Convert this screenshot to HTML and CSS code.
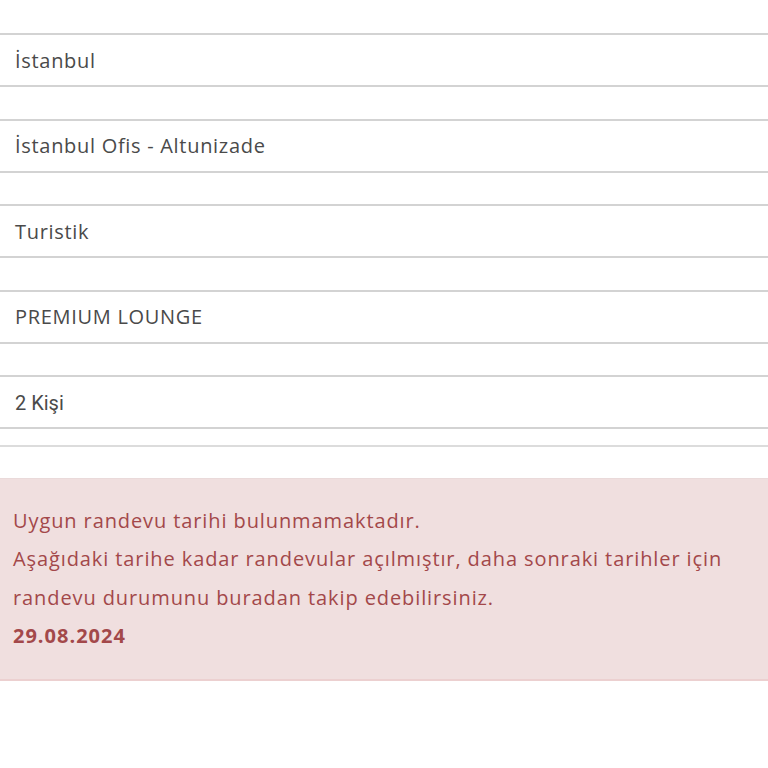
FILE: index.html
```html
<!DOCTYPE html>
<html lang="tr">
<head>
<meta charset="utf-8">
<link rel="stylesheet" href="styles.css">
</head>
<body>
<div class="page">
  <div class="fields">
    <div class="field">İstanbul</div>
    <div class="field">İstanbul Ofis - Altunizade</div>
    <div class="field">Turistik</div>
    <div class="field">PREMIUM LOUNGE</div>
    <div class="field alt">2 Kişi</div>
  </div>
  <div class="divider"></div>
  <div class="alert">
    <p>Uygun randevu tarihi bulunmamaktadır.</p>
    <p>Aşağıdaki tarihe kadar randevular açılmıştır, daha sonraki tarihler için randevu durumunu buradan takip edebilirsiniz.</p>
    <p class="date">29.08.2024</p>
  </div>
</div>
</body>
</html>
```

FILE: styles.css
```css
html, body {
  margin: 0;
  padding: 0;
  background: #ffffff;
}
.page {
  font-family: "Open Sans", "Liberation Sans", sans-serif;
  color: #4a4a4a;
  padding-top: 33px;
}
.fields {
  display: flex;
  flex-direction: column;
  gap: 31.5px;
}
.field {
  box-sizing: border-box;
  height: 54px;
  border-top: 2px solid #d3d3d3;
  border-bottom: 2px solid #d3d3d3;
  display: flex;
  align-items: center;
  padding-left: 15px;
  font-size: 20px;
  letter-spacing: 0.7px;
}
.field.alt {
  font-family: Roboto, "Liberation Sans", sans-serif;
  font-size: 20px;
  letter-spacing: 0;
  padding-top: 2px;
}
.divider {
  margin-top: 16px;
  height: 2px;
  background: #dcdcdc;
}
.alert {
  margin-top: 31px;
  background: #f0dfdf;
  border-top: 1px solid #eadada;
  border-bottom: 2px solid #ecd0d0;
  color: #a3484a;
  padding: 23px 13px 24px 13px;
  font-size: 20px;
  letter-spacing: 0.9px;
  line-height: 38.3px;
}
.alert p {
  margin: 0;
}
.alert .date {
  font-weight: 700;
  letter-spacing: 1px;
}
```
